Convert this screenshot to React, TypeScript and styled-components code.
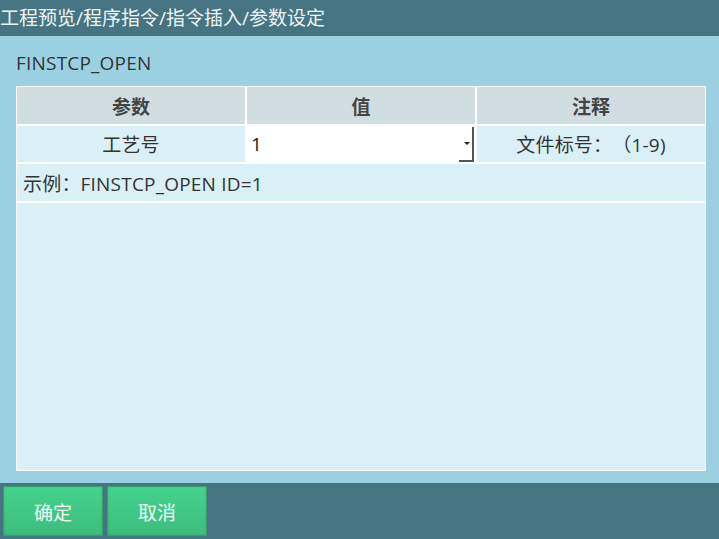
import React from "react";
import styled, { createGlobalStyle } from "styled-components";

const Global = createGlobalStyle`
  html, body { margin: 0; padding: 0; }
  body {
    width: 719px;
    height: 539px;
    overflow: hidden;
    font-family: "Open Sans", "Noto Sans CJK SC", sans-serif;
    text-spacing-trim: space-all;
  }
`;

const Screen = styled.div`
  width: 719px;
  height: 539px;
  display: flex;
  flex-direction: column;
`;

const TitleBar = styled.div`
  height: 36px;
  background: #467482;
  color: #eef4f6;
  font-size: 19px;
  line-height: 36px;
  padding-left: 0;
  white-space: nowrap;
`;

const Content = styled.div`
  flex: 1;
  background: #9bd0e2;
  padding: 15px 13px 12px 16px;
  display: flex;
  flex-direction: column;
`;

const CmdName = styled.div`
  font-size: 19px;
  line-height: 24px;
  color: #333;
  margin-bottom: 11px;
  letter-spacing: 0.2px;
`;

const Panel = styled.div`
  flex: 1;
  background: #d9f0f6;
  border: 1px solid #ffffff;
  display: flex;
  flex-direction: column;
`;

const Table = styled.div`
  display: grid;
  grid-template-columns: 1fr 1fr 1fr;
  grid-template-rows: 37px 36px 37px;
  gap: 2px;
  background: #ffffff;
  border-bottom: 2px solid #ffffff;
`;

const HeadCell = styled.div`
  background: #d0dee2;
  color: #444;
  font-weight: bold;
  font-size: 19px;
  display: flex;
  align-items: center;
  justify-content: center;
`;

const Cell = styled.div<{ $span?: boolean; $left?: boolean }>`
  background: #d9f0f6;
  color: #333;
  font-size: 19px;
  display: flex;
  align-items: center;
  justify-content: ${(p) => (p.$left ? "flex-start" : "center")};
  padding-left: ${(p) => (p.$left ? "6px" : "0")};
  grid-column: ${(p) => (p.$span ? "1 / span 3" : "auto")};
  white-space: pre;
  letter-spacing: 0.2px;
`;

const SelectCell = styled.div`
  background: #ffffff;
  position: relative;
  display: flex;
  align-items: center;
  font-size: 19px;
  color: #222;
  padding-left: 4px;
`;

const SelectEdge = styled.div`
  position: absolute;
  right: 1px;
  top: 1px;
  bottom: 0;
  width: 15px;
  border-right: 2px solid #555;
  border-bottom: 2px solid #555;
  box-sizing: border-box;
`;

const Arrow = styled.div`
  position: absolute;
  right: 5px;
  top: 16px;
  width: 0;
  height: 0;
  border-left: 3px solid transparent;
  border-right: 3px solid transparent;
  border-top: 3px solid #222;
`;

const Footer = styled.div`
  height: 56px;
  background: #467482;
  display: flex;
  align-items: center;
  gap: 4px;
  padding-left: 3px;
`;

const Button = styled.button`
  width: 100px;
  height: 50px;
  border: 1px solid #3a9d70;
  background: linear-gradient(#45d38c, #3dbd7c);
  box-shadow: inset 0 0 2px rgba(0, 0, 0, 0.15);
  color: #f4fff9;
  font-size: 19px;
  font-family: "Noto Sans CJK SC", sans-serif;
  padding: 0;
`;

export default function App() {
  return (
    <Screen>
      <Global />
      <TitleBar>工程预览/程序指令/指令插入/参数设定</TitleBar>
      <Content>
        <CmdName>FINSTCP_OPEN</CmdName>
        <Panel>
          <Table>
            <HeadCell>参数</HeadCell>
            <HeadCell>值</HeadCell>
            <HeadCell>注释</HeadCell>
            <Cell>工艺号</Cell>
            <SelectCell>
              1
              <SelectEdge />
              <Arrow />
            </SelectCell>
            <Cell>文件标号：（1-9)</Cell>
            <Cell $span $left>
              示例：FINSTCP_OPEN ID=1
            </Cell>
          </Table>
        </Panel>
      </Content>
      <Footer>
        <Button>确定</Button>
        <Button>取消</Button>
      </Footer>
    </Screen>
  );
}
